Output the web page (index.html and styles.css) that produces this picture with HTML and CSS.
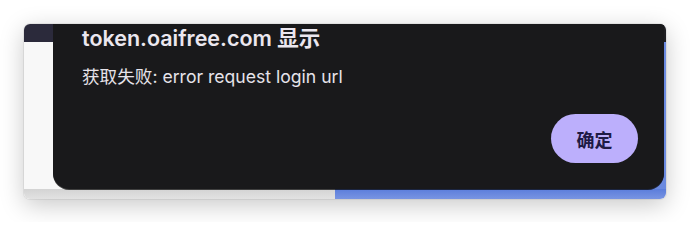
FILE: index.html
```html
<!DOCTYPE html>
<html lang="zh-CN">
<head>
<meta charset="utf-8">
<title>token.oaifree.com</title>
<link rel="stylesheet" href="styles.css">
</head>
<body>
<div class="stage">
  <div class="window">
    <div class="backdrop">
      <div class="bd-nav"></div>
      <div class="bd-top"></div>
      <div class="bd-side"></div>
      <div class="bd-page"></div>
      <div class="bd-foot-left"></div>
      <div class="bd-foot-right"></div>
    </div>
    <div class="dialog">
      <div class="dialog-title">token.oaifree.com 显示</div>
      <div class="dialog-message">获取失败: error request login url</div>
      <div class="dialog-actions">
        <button class="btn-ok">确定</button>
      </div>
    </div>
  </div>
</div>
</body>
</html>
```
FILE: styles.css
```css
html, body {
  margin: 0;
  padding: 0;
  background: #ffffff;
}
body {
  width: 690px;
  height: 222px;
  overflow: hidden;
  font-family: "Inter", "Noto Sans CJK SC", sans-serif;
}
.stage {
  padding: 24px 0 0 24px;
}
.window {
  width: 642px;
  height: 175px;
  border-radius: 6px;
  overflow: hidden;
  display: grid;
  box-shadow: 0 0 0 1px rgba(0,0,0,0.06), 0 6px 24px rgba(0,0,0,0.22);
}
.backdrop, .dialog {
  grid-area: 1 / 1;
}
.backdrop {
  display: grid;
  grid-template-columns: 29px 282px 1fr;
  grid-template-rows: 18px 1fr 10px;
  background: #f8f8f8;
}
.bd-nav { grid-column: 1; grid-row: 1; background: #2b2a3b; }
.bd-top { grid-column: 2 / 4; grid-row: 1; background: #1e1e22; }
.bd-side { grid-column: 1 / 3; grid-row: 2; background: #f8f8f8; }
.bd-page { grid-column: 3; grid-row: 2; background: #6b8ae0; }
.bd-foot-left {
  grid-column: 1 / 3; grid-row: 3;
  background: linear-gradient(#d3d3d3, #e2e2e2);
}
.bd-foot-right {
  grid-column: 3; grid-row: 3;
  background: linear-gradient(#5b7ddb, #7894e2);
}
.dialog {
  margin: 0 2px 10px 29px;
  background: #19191b;
  border-radius: 0 0 16px 16px;
  box-shadow: 0 1px 0 rgba(0,0,0,0.7);
  padding: 1px 26px 26px 29px;
  display: flex;
  flex-direction: column;
}
.dialog-title {
  font-size: 21.5px;
  line-height: 26px;
  font-weight: 600;
  color: #ebe7ef;
}
.dialog-message {
  margin-top: 15px;
  font-size: 17.6px;
  line-height: 21px;
  color: #e6e3ea;
}
.dialog-actions {
  margin-top: auto;
  display: flex;
  justify-content: flex-end;
}
.btn-ok {
  width: 87px;
  height: 49px;
  border: none;
  border-radius: 25px;
  background: #bcaffc;
  color: #1e1a45;
  font-family: "Noto Sans CJK SC", sans-serif;
  font-size: 18px;
  font-weight: 700;
  padding: 0;
}
```
